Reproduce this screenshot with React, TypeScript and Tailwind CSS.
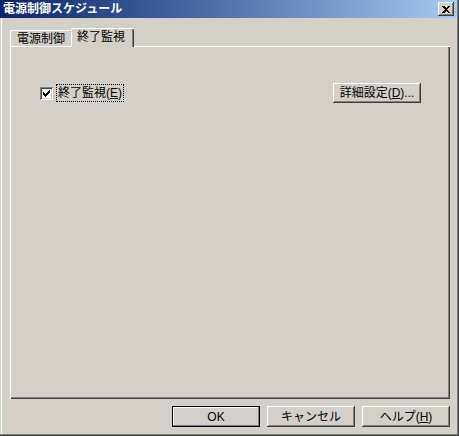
import type { ReactNode } from "react";

const FONT = "font-['Liberation_Sans','Noto_Sans_CJK_JP',sans-serif]";

function WinButton({
  children,
  isDefault = false,
  className = "",
}: {
  children: ReactNode;
  isDefault?: boolean;
  className?: string;
}) {
  const bevel = isDefault
    ? "border border-black shadow-[inset_-1px_-1px_#808080,inset_1px_1px_#ffffff]"
    : "shadow-[inset_-1px_-1px_#404040,inset_1px_1px_#ffffff,inset_-2px_-2px_#808080]";
  return (
    <button
      type="button"
      className={`${bevel} ${className} bg-[#d4d0c8] flex items-center justify-center whitespace-nowrap text-[12px] leading-[12px] text-black`}
    >
      {children}
    </button>
  );
}

function CheckMark() {
  return (
    <svg width="7" height="7" viewBox="0 0 7 7" shapeRendering="crispEdges">
      <path
        d="M6 0h1v3h-1v1h-1v1h-1v1h-1v1h-1v-1h-1v-1h-1v-3h1v1h1v1h1v-1h1v-1h1v-1h0z"
        fill="#000"
      />
    </svg>
  );
}

function CloseGlyph() {
  return (
    <svg width="8" height="7" viewBox="0 0 8 7" shapeRendering="crispEdges">
      <path d="M0 0h2l2 2 2-2h2L5 3.5 8 7H6L4 5 2 7H0l3-3.5z" fill="#000" />
    </svg>
  );
}

export default function App() {
  return (
    <div className={`${FONT} w-[459px] h-[436px] bg-[#d4d0c8] border-r border-b border-[#404040] select-none`}>
      <div className="w-full h-full border-r border-b border-[#808080] flex flex-col">
        {/* title bar */}
        <div className="h-[18px] shrink-0 flex items-center justify-between pl-[3px] pr-[3px] bg-linear-to-r from-[#0a246a] to-[#a6caf0]">
          <span className="text-white font-bold text-[12px] leading-[12px] whitespace-nowrap">電源制御スケジュール</span>
          <div className="w-[16px] h-[14px] bg-[#d4d0c8] flex items-center justify-center shadow-[inset_-1px_-1px_#404040,inset_1px_1px_#ffffff,inset_-2px_-2px_#808080]">
            <CloseGlyph />
          </div>
        </div>

        {/* body */}
        <div className="flex-1 flex flex-col pt-[10px] pl-[10px] pr-[7px] shadow-[inset_1px_0_#d4d0c8,inset_2px_0_#ffffff]">
          {/* tabs */}
          <div className="h-[18px] flex items-end">
            <div className="w-[63px] h-[16px] border-t border-l border-white rounded-t-[2px] shadow-[inset_-1px_0_#404040,inset_-2px_0_#808080] pl-[6px] pt-[2px] text-[12px] leading-[12px] text-black whitespace-nowrap">
              電源制御
            </div>
            <div className="relative z-10 -ml-[2px] -mb-px w-[63px] h-[19px] bg-[#d4d0c8] border-t border-l border-white rounded-t-[2px] shadow-[inset_-1px_0_#404040,inset_-2px_0_#808080] pl-[5px] pt-[2px] text-[12px] leading-[12px] text-black whitespace-nowrap">
              終了監視
            </div>
          </div>

          {/* panel */}
          <div className="h-[353px] w-[440px] border-t border-l border-white shadow-[inset_-1px_-1px_#404040,inset_-2px_-2px_#808080]">
            <div className="mt-[36px] h-[20px] flex items-center justify-between pl-[29px] pr-[29px]">
              <div className="flex items-center">
                <div className="w-[13px] h-[13px] bg-white flex items-center justify-center shadow-[inset_1px_1px_#808080,inset_-1px_-1px_#ffffff,inset_2px_2px_#404040,inset_-2px_-2px_#d4d0c8]">
                  <CheckMark />
                </div>
                <div className="ml-[3px] h-[18px] border border-dotted border-black flex items-center px-[1px] whitespace-nowrap text-[12px] leading-[12px] text-black">
                  終了監視(<span className="underline">E</span>)
                </div>
              </div>
              <WinButton className="w-[88px] h-[20px]">
                詳細設定(<span className="underline">D</span>)...
              </WinButton>
            </div>
          </div>

          {/* dialog buttons */}
          <div className="mt-[7px] w-[440px] flex justify-end gap-[7px]">
            <WinButton isDefault className="w-[88px] h-[21px]">
              OK
            </WinButton>
            <WinButton className="w-[88px] h-[21px]">キャンセル</WinButton>
            <WinButton className="w-[88px] h-[21px]">
              ヘルプ(<span className="underline">H</span>)
            </WinButton>
          </div>
        </div>
      </div>
    </div>
  );
}
